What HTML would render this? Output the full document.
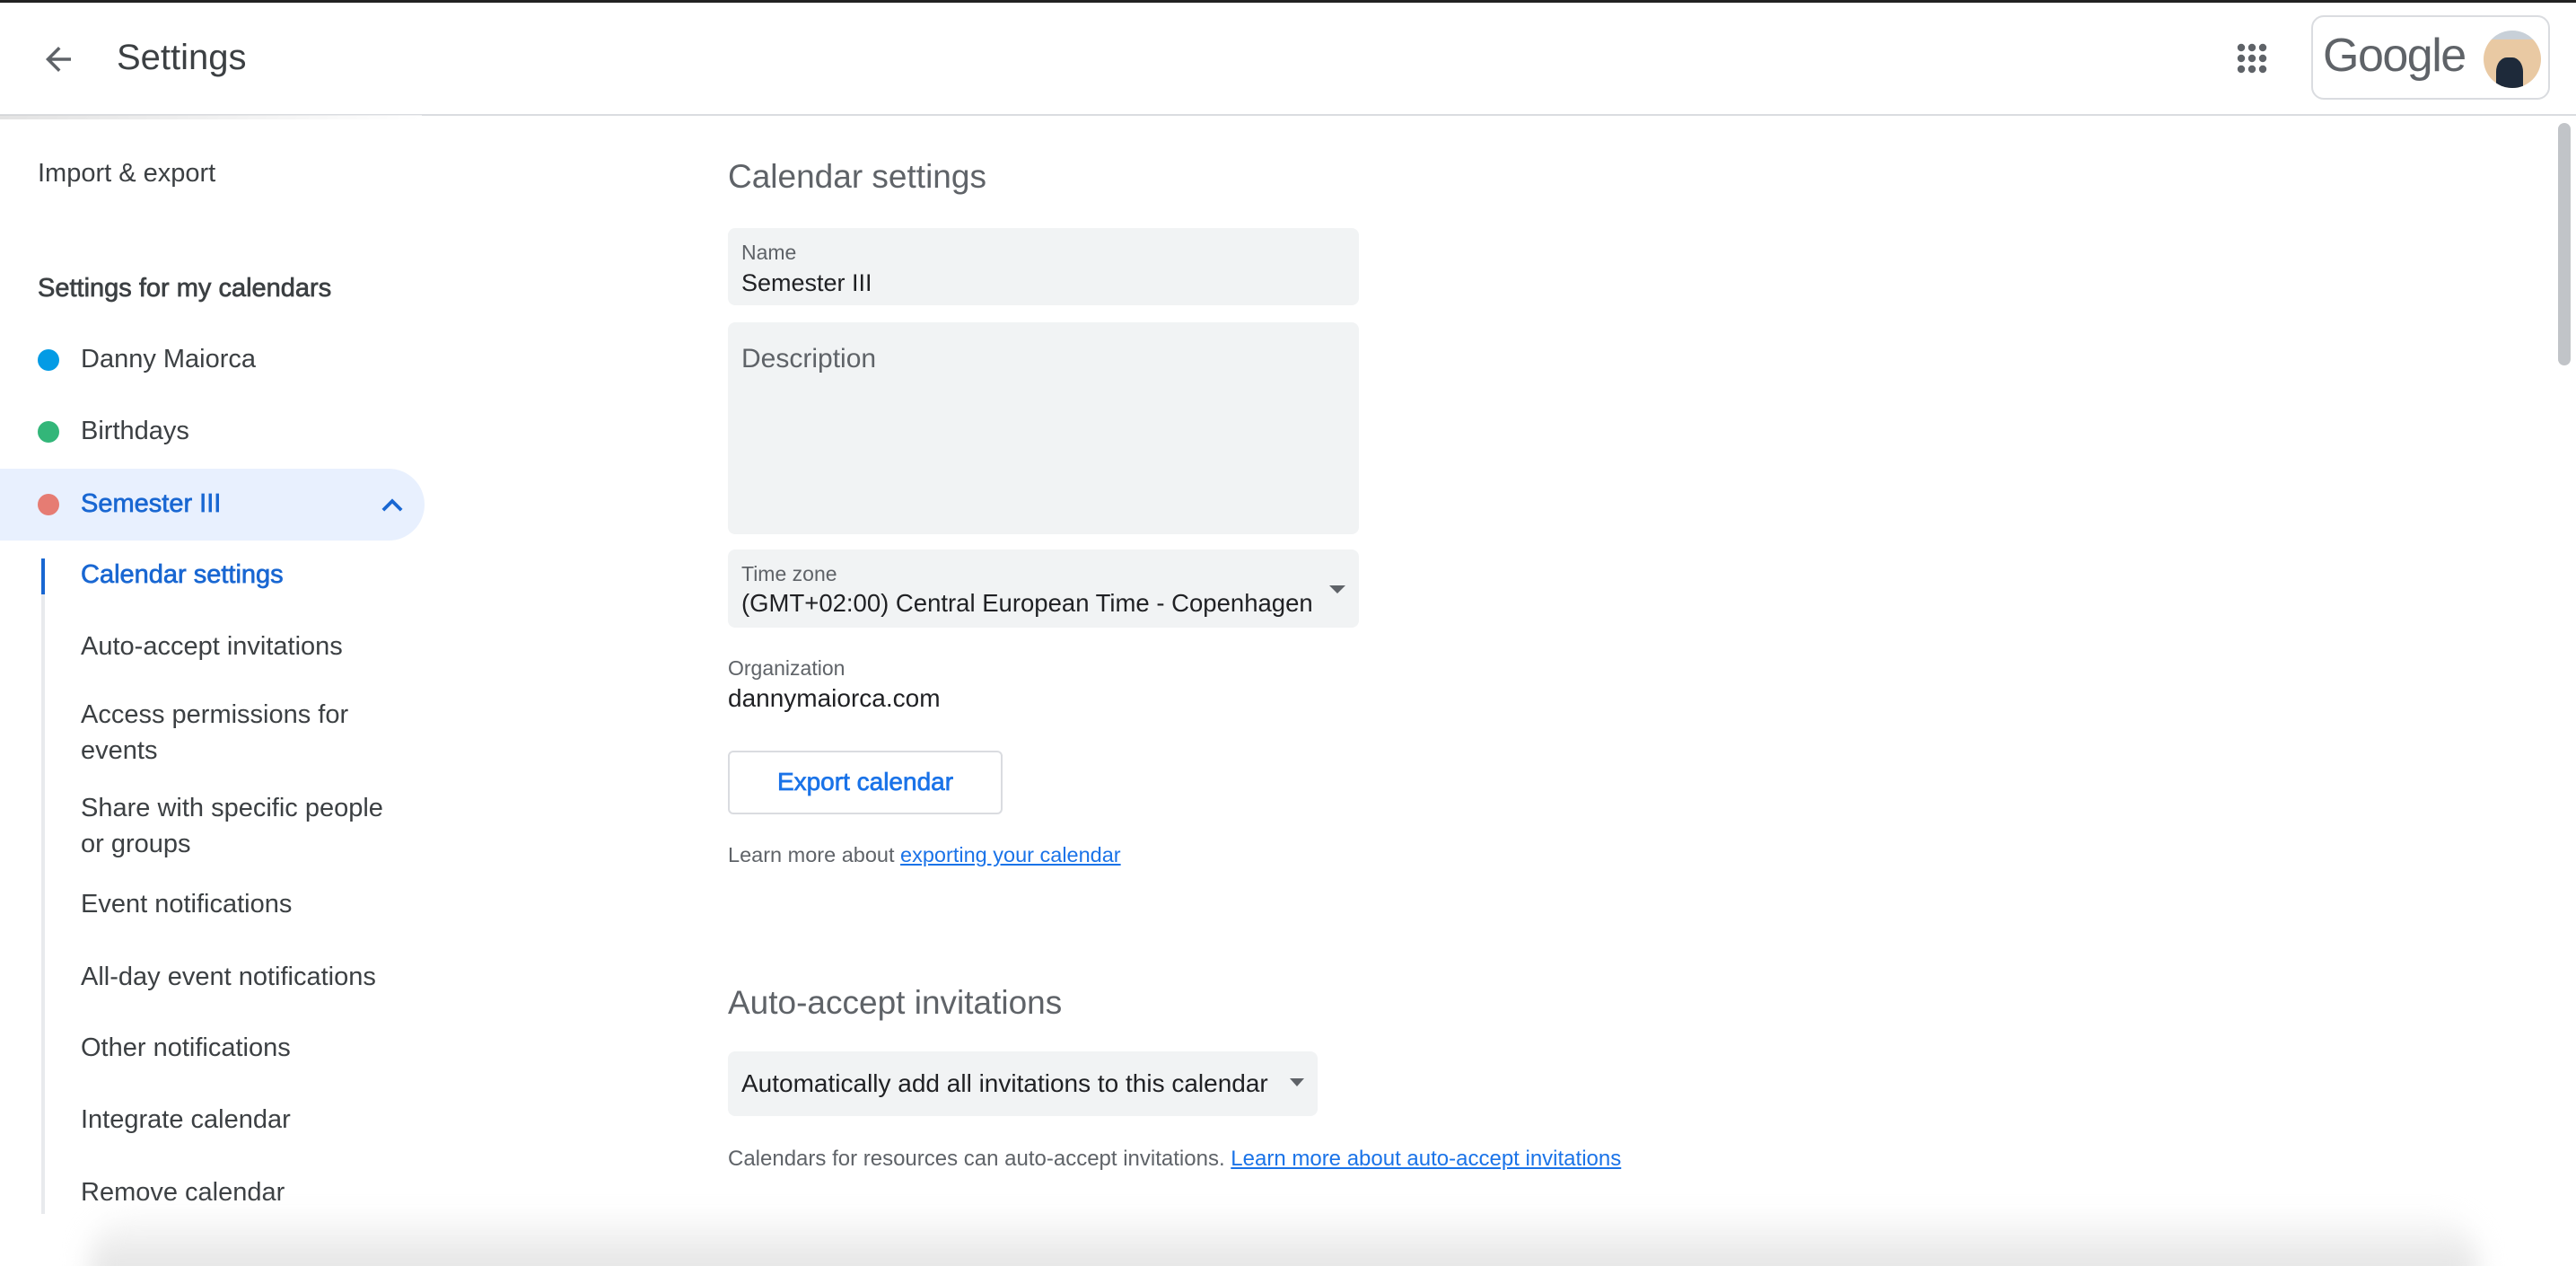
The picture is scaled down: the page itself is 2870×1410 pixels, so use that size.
<!DOCTYPE html>
<html><head><meta charset="utf-8"><style>
*{margin:0;padding:0;box-sizing:border-box}
html{width:2870px;height:1410px;overflow:hidden}
body{width:2870px;height:1410px;overflow:hidden;background:#fff;font-family:"Liberation Sans",Roboto,Arial,sans-serif;color:#3c4043;position:relative}
.a{position:absolute;white-space:nowrap}
.nav{font-size:29px;color:#3c4043;left:90px}
.med{font-weight:normal;-webkit-text-stroke:0.7px currentColor}
.box{position:absolute;background:#f1f3f4;border-radius:8px}
.lbl{font-size:23px;color:#5f6368}
a{color:#1a73e8;text-decoration:underline}
</style></head><body>
<div class="a" style="left:0;top:0;width:2870px;height:3px;background:#222"></div>
<svg class="a" style="left:44px;top:45px" width="42" height="42" viewBox="0 0 24 24"><path d="M20 11H7.83l5.59-5.59L12 4l-8 8 8 8 1.41-1.41L7.83 13H20v-2z" fill="#5f6368"/></svg>
<div class="a" style="left:130px;top:42px;font-size:40px;color:#3c4043">Settings</div>
<svg class="a" style="left:2491px;top:47px" width="36" height="36" viewBox="0 0 24 24" fill="#5f6368"><circle cx="4" cy="4" r="2.8"/><circle cx="12" cy="4" r="2.8"/><circle cx="20" cy="4" r="2.8"/><circle cx="4" cy="12" r="2.8"/><circle cx="12" cy="12" r="2.8"/><circle cx="20" cy="12" r="2.8"/><circle cx="4" cy="20" r="2.8"/><circle cx="20" cy="20" r="2.8"/><circle cx="12" cy="20" r="2.8"/></svg>
<div class="a" style="left:2575px;top:17px;width:266px;height:94px;border:2px solid #dadce0;border-radius:14px"></div>
<div class="a" style="left:2588px;top:32px;font-size:52px;color:#5f6368;letter-spacing:-1.5px">Google</div>
<div class="a" style="left:2767px;top:34px;width:64px;height:64px;border-radius:50%;overflow:hidden;background:linear-gradient(180deg,#c8d0d8 0 15%,#e9c9a3 16%)"><div style="position:absolute;left:14px;top:30px;width:30px;height:40px;background:#1e2a3a;border-radius:40% 40% 0 0"></div></div>
<div class="a" style="left:0;top:127px;width:2870px;height:2px;background:#dadce0"></div>
<div class="a" style="left:0;top:128px;width:470px;height:5px;background:linear-gradient(90deg,#d0d0d0,#fff);opacity:.6"></div>
<div class="a" style="left:2850px;top:137px;width:14px;height:270px;background:#c1c4c8;border-radius:7px"></div>

<div class="a nav" style="left:42px;top:177px">Import &amp; export</div>
<div class="a nav med" style="left:42px;top:305px">Settings for my calendars</div>
<div class="a" style="left:42px;top:389px;width:24px;height:24px;border-radius:50%;background:#039be5"></div>
<div class="a nav" style="top:384px">Danny Maiorca</div>
<div class="a" style="left:42px;top:469px;width:24px;height:24px;border-radius:50%;background:#33b679"></div>
<div class="a nav" style="top:464px">Birthdays</div>
<div class="a" style="left:0;top:522px;width:473px;height:80px;background:#e8f0fe;border-radius:0 40px 40px 0"></div>
<div class="a" style="left:42px;top:550px;width:24px;height:24px;border-radius:50%;background:#e67c73"></div>
<div class="a nav med" style="top:545px;color:#1967d2">Semester III</div>
<svg class="a" style="left:414px;top:540px" width="46" height="46" viewBox="0 0 24 24"><path d="M7.41 15.41L12 10.83l4.59 4.58L18 14l-6-6-6 6z" fill="#1967d2"/></svg>
<div class="a" style="left:46px;top:622px;width:4px;height:730px;background:#e8eaed"></div>
<div class="a" style="left:46px;top:622px;width:4px;height:40px;background:#1967d2"></div>
<div class="a nav med" style="top:624px;color:#1967d2">Calendar settings</div>
<div class="a nav" style="top:704px">Auto-accept invitations</div>
<div class="a nav" style="top:776px;line-height:40px">Access permissions for<br>events</div>
<div class="a nav" style="top:880px;line-height:40px">Share with specific people<br>or groups</div>
<div class="a nav" style="top:991px">Event notifications</div>
<div class="a nav" style="top:1072px">All-day event notifications</div>
<div class="a nav" style="top:1151px">Other notifications</div>
<div class="a nav" style="top:1231px">Integrate calendar</div>
<div class="a nav" style="top:1312px">Remove calendar</div>

<div class="a" style="left:811px;top:176px;font-size:37px;color:#5f6368">Calendar settings</div>
<div class="box" style="left:811px;top:254px;width:703px;height:86px"></div>
<div class="a lbl" style="left:826px;top:268px">Name</div>
<div class="a" style="left:826px;top:300px;font-size:27px;color:#202124">Semester III</div>
<div class="box" style="left:811px;top:359px;width:703px;height:236px"></div>
<div class="a" style="left:826px;top:383px;font-size:30px;color:#5f6368">Description</div>
<div class="box" style="left:811px;top:612px;width:703px;height:87px"></div>
<div class="a lbl" style="left:826px;top:626px">Time zone</div>
<div class="a" style="left:826px;top:656px;font-size:27.5px;color:#202124">(GMT+02:00) Central European Time - Copenhagen</div>
<div class="a" style="left:1481px;top:652px;width:0;height:0;border-left:9px solid transparent;border-right:9px solid transparent;border-top:9px solid #5f6368"></div>
<div class="a lbl" style="left:811px;top:731px">Organization</div>
<div class="a" style="left:811px;top:762px;font-size:28px;color:#202124">dannymaiorca.com</div>
<div class="a" style="left:811px;top:836px;width:306px;height:71px;border:2px solid #dadce0;border-radius:6px"></div>
<div class="a med" style="left:811px;top:855px;width:306px;text-align:center;font-size:28px;color:#1a73e8">Export calendar</div>
<div class="a" style="left:811px;top:939px;font-size:23.5px;color:#5f6368">Learn more about <a>exporting your calendar</a></div>
<div class="a" style="left:811px;top:1096px;font-size:37px;color:#5f6368">Auto-accept invitations</div>
<div class="box" style="left:811px;top:1171px;width:657px;height:72px"></div>
<div class="a" style="left:826px;top:1191px;font-size:28px;color:#202124">Automatically add all invitations to this calendar</div>
<div class="a" style="left:1437px;top:1201px;width:0;height:0;border-left:8px solid transparent;border-right:8px solid transparent;border-top:9px solid #5f6368"></div>
<div class="a" style="left:811px;top:1277px;font-size:24px;color:#5f6368">Calendars for resources can auto-accept invitations. <a>Learn more about auto-accept invitations</a></div>
<div class="a" style="left:0;top:1330px;width:2870px;height:80px;overflow:hidden"><div style="position:absolute;left:100px;top:15px;width:2660px;height:90px;background:linear-gradient(180deg,rgba(236,236,236,0),rgba(230,230,230,1) 70%);border-radius:60px 60px 0 0;filter:blur(14px)"></div></div>
</body></html>
